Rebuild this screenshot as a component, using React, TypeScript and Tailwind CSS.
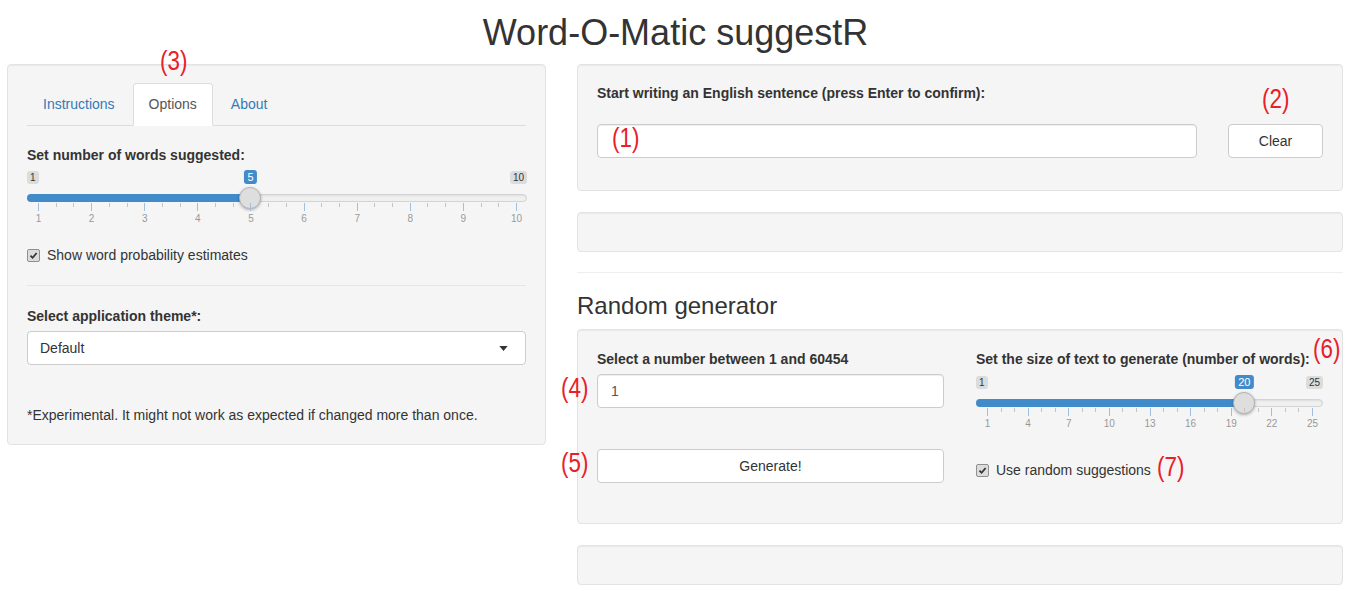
type SliderProps = {
  min: number;
  max: number;
  value: number;
  majorStep: number;
  width: number;
};

function RangeSlider({ min, max, value, majorStep, width }: SliderProps) {
  const pad = 11;
  const span = width - pad * 2;
  const pos = (v: number) => pad + ((v - min) / (max - min)) * span;
  const ticks: { v: number; major: boolean }[] = [];
  const count = ((max - min) / majorStep) * 3;
  for (let i = 0; i <= count; i++) {
    ticks.push({ v: min + (i * majorStep) / 3, major: i % 3 === 0 });
  }

  return (
    <div className="relative h-[58px]" style={{ width }}>
      <span className="absolute left-0 top-[1px] rounded-[3px] bg-black/10 px-[3px] text-[10px] leading-[13px] text-[#333]">
        {min}
      </span>
      <span className="absolute right-0 top-[1px] rounded-[3px] bg-black/10 px-[3px] text-[10px] leading-[13px] text-[#333]">
        {max}
      </span>
      <span
        className="absolute top-0 -translate-x-1/2 rounded-[3px] bg-[#428bca] px-[3px] text-[11px] leading-[14px] text-white"
        style={{ left: pos(value) }}
      >
        {value}
      </span>

      <div className="absolute left-0 right-0 top-[24px] h-[8px] rounded-full border border-[#d4d4d4] bg-[#f0f0f0] shadow-[inset_0_1px_2px_rgba(0,0,0,0.08)]" />
      <div
        className="absolute left-0 top-[24px] h-[8px] rounded-l-full bg-[#428bca]"
        style={{ width: pos(value) }}
      />
      <div
        className="absolute top-[17px] h-[22px] w-[22px] -translate-x-1/2 rounded-full border border-[#b4b4b4] bg-[#dedede] shadow-[0_1px_3px_rgba(0,0,0,0.3)]"
        style={{ left: pos(value) }}
      />

      {ticks.map((t) => (
        <div
          key={t.v}
          className={
            t.major
              ? "absolute top-[33px] h-[8px] w-px bg-[#9fc0e0]"
              : "absolute top-[33px] h-[4px] w-px bg-[#c4c4c4]"
          }
          style={{ left: pos(t.v) }}
        />
      ))}
      {ticks
        .filter((t) => t.major)
        .map((t) => (
          <span
            key={"l" + t.v}
            className="absolute top-[43px] -translate-x-1/2 text-[10px] leading-[12px] text-[#999]"
            style={{ left: pos(t.v) + 0.5 }}
          >
            {t.v}
          </span>
        ))}
    </div>
  );
}

function Check({ label }: { label: string }) {
  return (
    <div className="flex h-[20px] items-center gap-[7px]">
      <span className="flex h-[13px] w-[13px] items-center justify-center rounded-[2px] border border-[#8f8f8f] bg-[#dcdcdc]">
        <svg viewBox="0 0 10 10" className="h-[9px] w-[9px]">
          <path d="M1.6 5.2 L4 7.6 L8.5 2.2" stroke="#333" strokeWidth="1.9" fill="none" />
        </svg>
      </span>
      <span className="text-[14px] text-[#333]">{label}</span>
    </div>
  );
}

const wellCls =
  "rounded-[4px] border border-[#e3e3e3] bg-[#f5f5f5] shadow-[inset_0_1px_1px_rgba(0,0,0,0.05)]";

const notes = [
  { text: "(3)", cls: "left-[160px] top-[47px]" },
  { text: "(1)", cls: "left-[612px] top-[124px]" },
  { text: "(2)", cls: "left-[1262px] top-[85px]" },
  { text: "(4)", cls: "left-[561px] top-[374px]" },
  { text: "(5)", cls: "left-[561px] top-[449px]" },
  { text: "(6)", cls: "left-[1313px] top-[335px]" },
  { text: "(7)", cls: "left-[1157px] top-[453px]" },
];

export default function App() {
  return (
    <div className="relative h-[593px] w-[1351px] overflow-hidden bg-white font-['Liberation_Sans',Arial,sans-serif] text-[14px] leading-[20px] text-[#333]">
      <h1 className="mb-[11px] mt-[13px] text-center text-[36px] leading-[40px] text-[#333]">
        Word-O-Matic suggestR
      </h1>

      <div className="flex items-start gap-[31px] pl-[7px]">
        {/* sidebar */}
        <div className={`${wellCls} w-[539px] px-[19px] pb-[19px] pt-[18px]`}>
          <div className="flex border-b border-[#ddd]">
            <span className="mr-[2px] border border-transparent px-[15px] py-[10px] text-[#337ab7]">
              Instructions
            </span>
            <span className="-mb-px mr-[2px] rounded-t-[4px] border border-[#ddd] border-b-white bg-white px-[15px] py-[10px] text-[#555]">
              Options
            </span>
            <span className="mr-[2px] border border-transparent px-[15px] py-[10px] text-[#337ab7]">
              About
            </span>
          </div>

          <div className="mt-[19px]">
            <div className="mb-[5px] font-bold">Set number of words suggested:</div>
            <RangeSlider min={1} max={10} value={5} majorStep={1} width={500} />
            <div className="mt-[17px]">
              <Check label="Show word probability estimates" />
            </div>
            <hr className="my-[20px] border-t border-[#e6e6e6]" />
            <div className="mb-[5px] font-bold">Select application theme*:</div>
            <div className="flex h-[34px] items-center justify-between rounded-[4px] border border-[#ccc] bg-white pl-[12px] pr-[17px]">
              <span className="text-[#333]">Default</span>
              <svg viewBox="0 0 10 6" className="h-[5px] w-[9px]">
                <path d="M0 0 H10 L5 6 Z" fill="#333" />
              </svg>
            </div>
            <p className="mt-[40px]">
              *Experimental. It might not work as expected if changed more than once.
            </p>
          </div>
        </div>

        {/* main */}
        <div className="w-[766px]">
          <div className={`${wellCls} px-[19px] pb-[32px] pt-[18px]`}>
            <div className="font-bold">
              Start writing an English sentence (press Enter to confirm):
            </div>
            <div className="mt-[21px] flex items-center justify-between">
              <div className="h-[34px] w-[600px] rounded-[4px] border border-[#ccc] bg-white shadow-[inset_0_1px_1px_rgba(0,0,0,0.075)]" />
              <button className="h-[34px] w-[95px] rounded-[4px] border border-[#ccc] bg-white text-[#333]">
                Clear
              </button>
            </div>
          </div>

          <div className={`${wellCls} mt-[21px] h-[40px]`} />

          <hr className="mt-[20px] border-t border-[#eee]" />

          <h3 className="mb-[10px] mt-[20px] text-[24px] leading-[26px] text-[#333]">
            Random generator
          </h3>

          <div className={`${wellCls} flex gap-[32px] px-[19px] pb-[40px] pt-[19px]`}>
            <div className="w-[347px]">
              <div className="font-bold">Select a number between 1 and 60454</div>
              <div className="mt-[5px] flex h-[34px] items-center rounded-[4px] border border-[#ccc] bg-white pl-[13px] text-[#555] shadow-[inset_0_1px_1px_rgba(0,0,0,0.075)]">
                1
              </div>
              <button className="mt-[41px] h-[34px] w-full rounded-[4px] border border-[#ccc] bg-white text-[#333]">
                Generate!
              </button>
            </div>
            <div className="w-[347px]">
              <div className="font-bold">
                Set the size of text to generate (number of words):
              </div>
              <div className="mt-[6px]">
                <RangeSlider min={1} max={25} value={20} majorStep={3} width={347} />
              </div>
              <div className="mt-[27px]">
                <Check label="Use random suggestions" />
              </div>
            </div>
          </div>

          <div className={`${wellCls} mt-[21px] h-[40px]`} />
        </div>
      </div>

      {notes.map((n) => (
        <span
          key={n.text}
          className={`absolute ${n.cls} origin-left scale-x-[0.8] text-[28px] leading-[28px] text-[#e8202a]`}
        >
          {n.text}
        </span>
      ))}
    </div>
  );
}
